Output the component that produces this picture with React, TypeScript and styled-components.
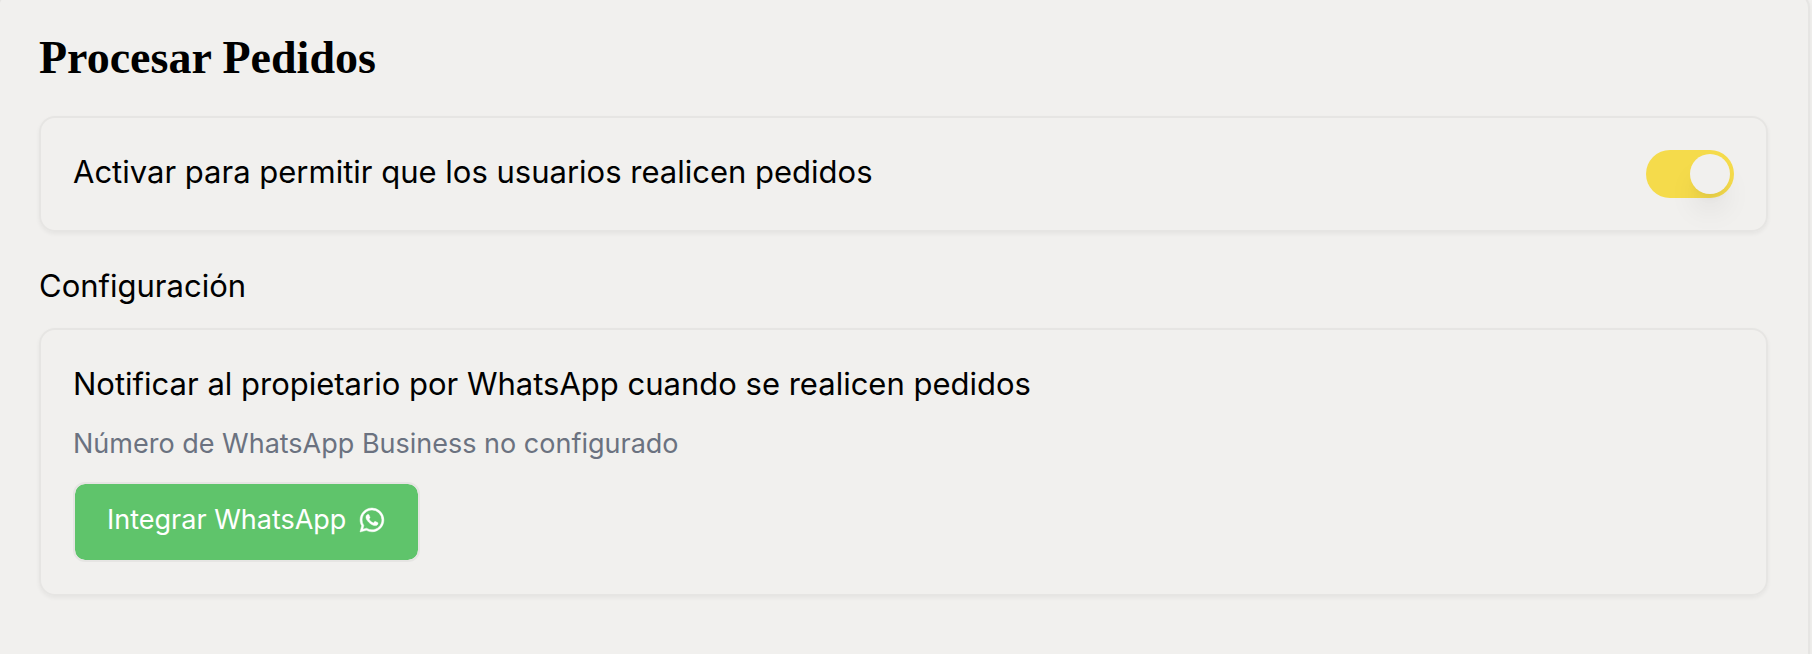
import React, { useState } from 'react';
import styled, { createGlobalStyle } from 'styled-components';
import { BsWhatsapp } from 'react-icons/bs';

const surface = '#f1f0ee';
const line = '#e6e5e3';

const GlobalStyle = createGlobalStyle`
  *, *::before, *::after { box-sizing: border-box; }
  body {
    margin: 0;
    background: ${surface};
    color: #000;
    font-family: Inter, "Liberation Sans", sans-serif;
  }
`;

const Page = styled.div`
  min-height: 100vh;
  overflow: hidden;
  display: flex;
`;

const Panel = styled.main`
  flex: 1;
  margin: -8px 2px -24px -3px;
  padding: 32px 40px 80px;
  border: 2px solid ${line};
  border-radius: 16px;
  background: ${surface};
  box-shadow: 0 2px 4px rgba(0, 0, 0, 0.05);
`;

const Title = styled.h1`
  margin: 0 0 26px;
  font-family: "Liberation Serif", serif;
  font-size: 46px;
  line-height: 64px;
  font-weight: 700;
`;

const Subtitle = styled.h2`
  margin: 32px 0 20px;
  font-size: 31px;
  line-height: 44px;
  font-weight: 400;
`;

const Card = styled.section`
  padding: 32px;
  border: 2px solid ${line};
  border-radius: 16px;
  box-shadow: 0 2px 4px rgba(0, 0, 0, 0.05);
`;

const SwitchRow = styled.div`
  display: flex;
  justify-content: space-between;
  gap: 32px;
`;

const Label = styled.label`
  font-size: 31px;
  line-height: 44px;
`;

const Switch = styled.input`
  appearance: none;
  flex: none;
  display: flex;
  align-items: center;
  width: 88px;
  height: 48px;
  margin: 0;
  padding: 4px;
  border-radius: 24px;
  background: #d9d8d6;
  cursor: pointer;

  &::before {
    content: "";
    width: 40px;
    height: 40px;
    border-radius: 50%;
    background: ${surface};
    box-shadow: 0 20px 30px -6px rgba(0, 0, 0, 0.1), 0 8px 12px -8px rgba(0, 0, 0, 0.1);
  }

  &:checked { background: #f5db4b; }
  &:checked::before { margin-left: auto; }
`;

const Lead = styled.p`
  margin: 0;
  font-size: 31px;
  line-height: 44px;
`;

const Note = styled.p`
  margin: 16px 0;
  font-size: 27px;
  line-height: 44px;
  color: #6b7280;
`;

const Button = styled.button`
  display: flex;
  align-items: center;
  gap: 14px;
  height: 80px;
  padding: 0 34px 4px 32px;
  border: 2px solid ${line};
  border-radius: 12px;
  background: #5fc46b;
  background-clip: padding-box;
  color: #fff;
  font: inherit;
  font-size: 27px;
  line-height: 44px;
  cursor: pointer;
`;

const WhatsAppIcon = styled(BsWhatsapp)`
  flex: none;
  width: 24px;
  height: 24px;
  overflow: visible;
  stroke: currentColor;
  stroke-width: 0.3;
`;

export default function App() {
  const [enabled, setEnabled] = useState(true);
  return (
    <>
      <GlobalStyle />
      <Page>
        <Panel>
          <Title>Procesar Pedidos</Title>
          <Card>
            <SwitchRow>
              <Label htmlFor="orders">Activar para permitir que los usuarios realicen pedidos</Label>
              <Switch
                id="orders"
                type="checkbox"
                role="switch"
                checked={enabled}
                onChange={(e) => setEnabled(e.target.checked)}
              />
            </SwitchRow>
          </Card>
          <Subtitle>Configuración</Subtitle>
          <Card>
            <Lead>Notificar al propietario por WhatsApp cuando se realicen pedidos</Lead>
            <Note>Número de WhatsApp Business no configurado</Note>
            <Button type="button">
              Integrar WhatsApp
              <WhatsAppIcon aria-hidden="true" />
            </Button>
          </Card>
        </Panel>
      </Page>
    </>
  );
}
